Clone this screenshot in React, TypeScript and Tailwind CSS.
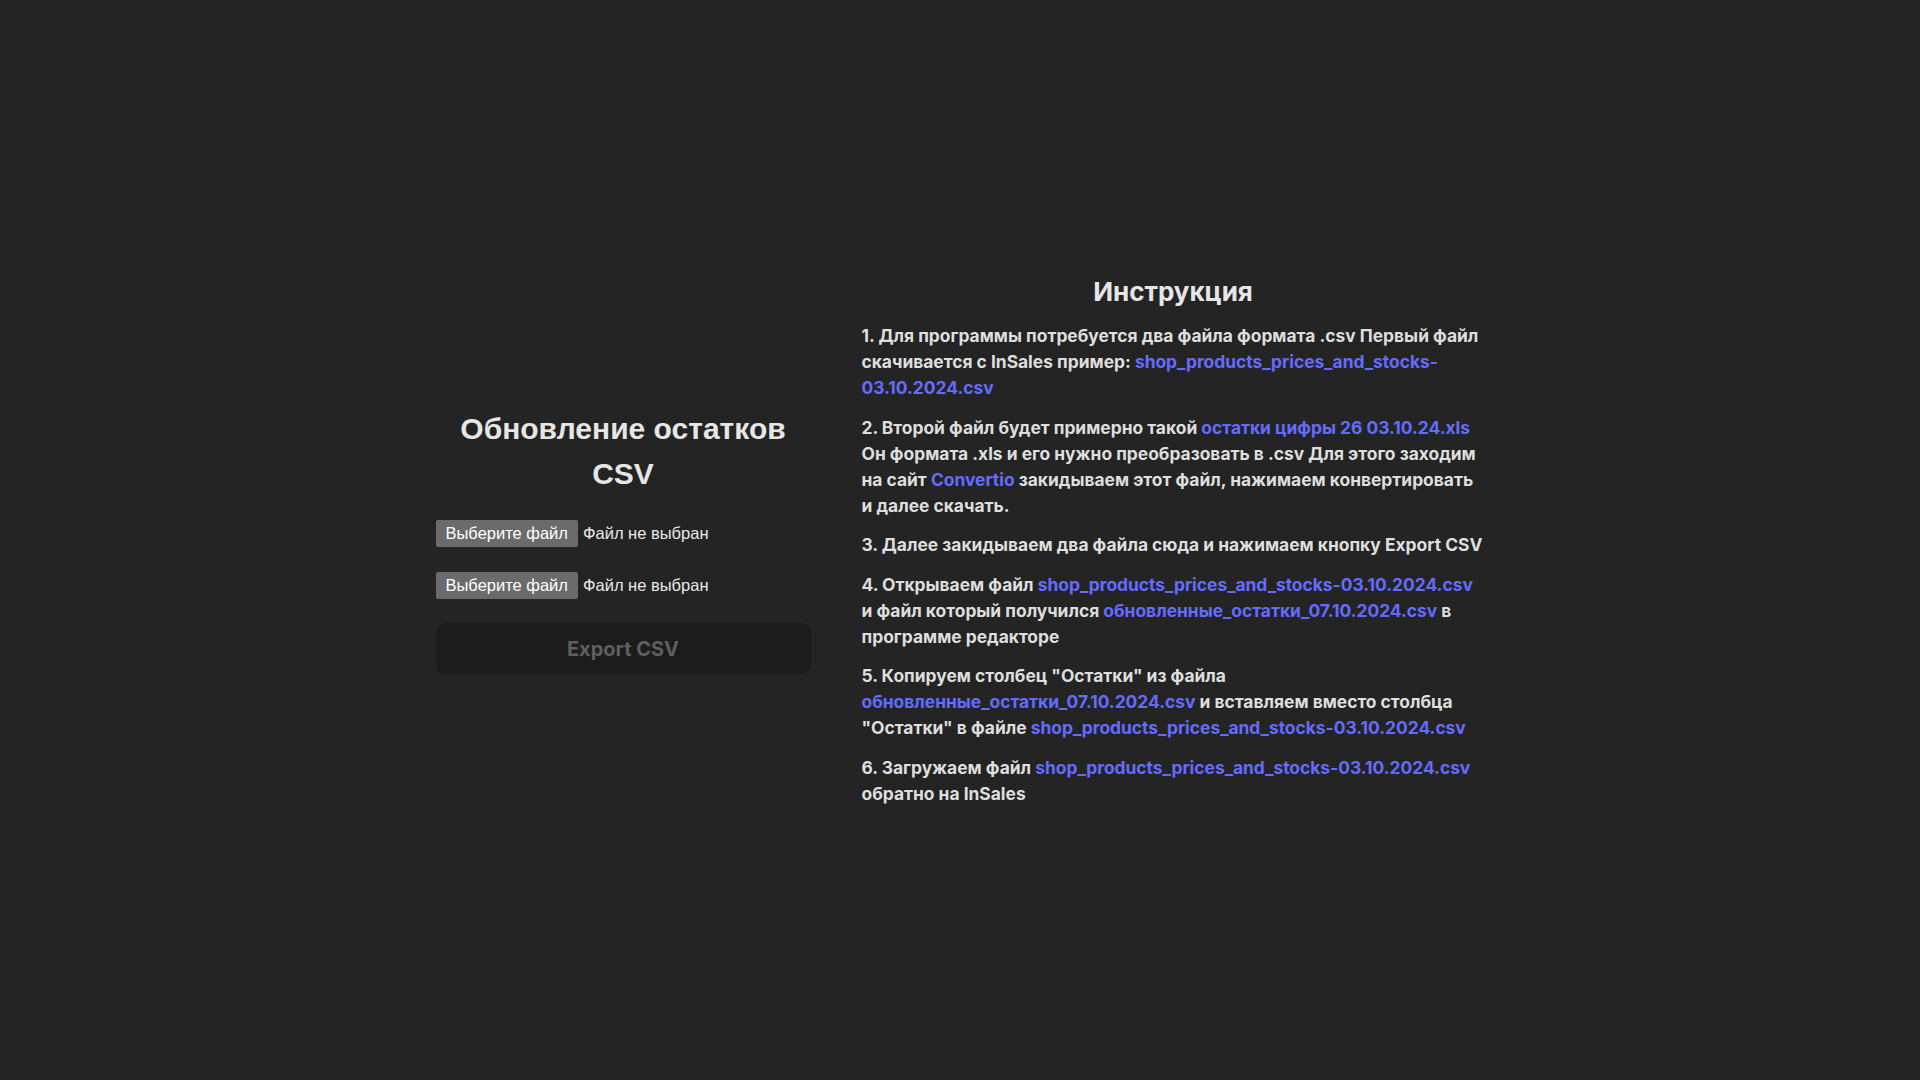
import { useState } from 'react';

const link = 'text-[#646cff] hover:text-[#535bf2]';

function FilePicker({ id }: { id: string }) {
  const [name, setName] = useState<string>('');

  return (
    <div className="flex items-center gap-[5px] font-['Liberation_Sans',Arial,sans-serif] text-[16.5px] text-[#e8e8e8]">
      <input
        type="file"
        accept=".csv"
        id={id}
        className="hidden"
        onChange={(e) => setName(e.target.files?.[0]?.name ?? '')}
      />
      <label
        htmlFor={id}
        className="cursor-pointer h-[27px] px-[10px] flex items-center rounded-[2px] bg-[#6b6b6b] text-white"
      >
        Выберите файл
      </label>
      <span>{name || 'Файл не выбран'}</span>
    </div>
  );
}

export default function App() {
  return (
    <div className="min-h-screen bg-[#242424] text-[#dedede] font-['Inter','Noto_Sans',sans-serif] flex items-center justify-center gap-[51px]">
      {/* левая колонка */}
      <div className="w-[375px] flex flex-col">
        <h1 className="text-center font-['Liberation_Sans',Arial,sans-serif] font-bold text-[30px] leading-[45px] text-[#e6e6e6]">
          Обновление остатков
          <br />
          CSV
        </h1>
        <div className="mt-[24px] flex flex-col gap-[25px]">
          <FilePicker id="file-insales" />
          <FilePicker id="file-stock" />
        </div>
        <button
          disabled
          className="mt-[24px] h-[51px] w-full rounded-[9px] bg-[#1c1c1c] text-[20px] font-bold text-[#5f5f5f] cursor-not-allowed"
        >
          Export CSV
        </button>
      </div>

      {/* инструкция */}
      <div className="w-[623px] pt-[4px] text-[17.4px] leading-[26px] font-bold">
        <h2 className="text-center text-[26px] leading-[30px] font-bold text-[#e6e6e6] mb-[16px]">
          Инструкция
        </h2>
        <div className="flex flex-col gap-[13.5px]">
          <p>
            1. Для программы потребуется два файла формата .csv Первый файл скачивается с InSales пример:{' '}
            <a href="#" className={link}>shop_products_prices_and_stocks-03.10.2024.csv</a>
          </p>
          <p>
            2. Второй файл будет примерно такой{' '}
            <a href="#" className={link}>остатки цифры 26 03.10.24.xls</a> Он формата .xls и его нужно
            преобразовать в .csv Для этого заходим на сайт{' '}
            <a href="#" className={link}>Convertio</a> закидываем этот файл, нажимаем конвертировать и далее
            скачать.
          </p>
          <p>3. Далее закидываем два файла сюда и нажимаем кнопку Export CSV</p>
          <p>
            4. Открываем файл{' '}
            <a href="#" className={link}>shop_products_prices_and_stocks-03.10.2024.csv</a> и файл который
            получился <a href="#" className={link}>обновленные_остатки_07.10.2024.csv</a> в программе редакторе
          </p>
          <p>
            5. Копируем столбец "Остатки" из файла{' '}
            <a href="#" className={link}>обновленные_остатки_07.10.2024.csv</a> и вставляем вместо столбца
            "Остатки" в файле{' '}
            <a href="#" className={link}>shop_products_prices_and_stocks-03.10.2024.csv</a>
          </p>
          <p>
            6. Загружаем файл{' '}
            <a href="#" className={link}>shop_products_prices_and_stocks-03.10.2024.csv</a> обратно на InSales
          </p>
        </div>
      </div>
    </div>
  );
}
